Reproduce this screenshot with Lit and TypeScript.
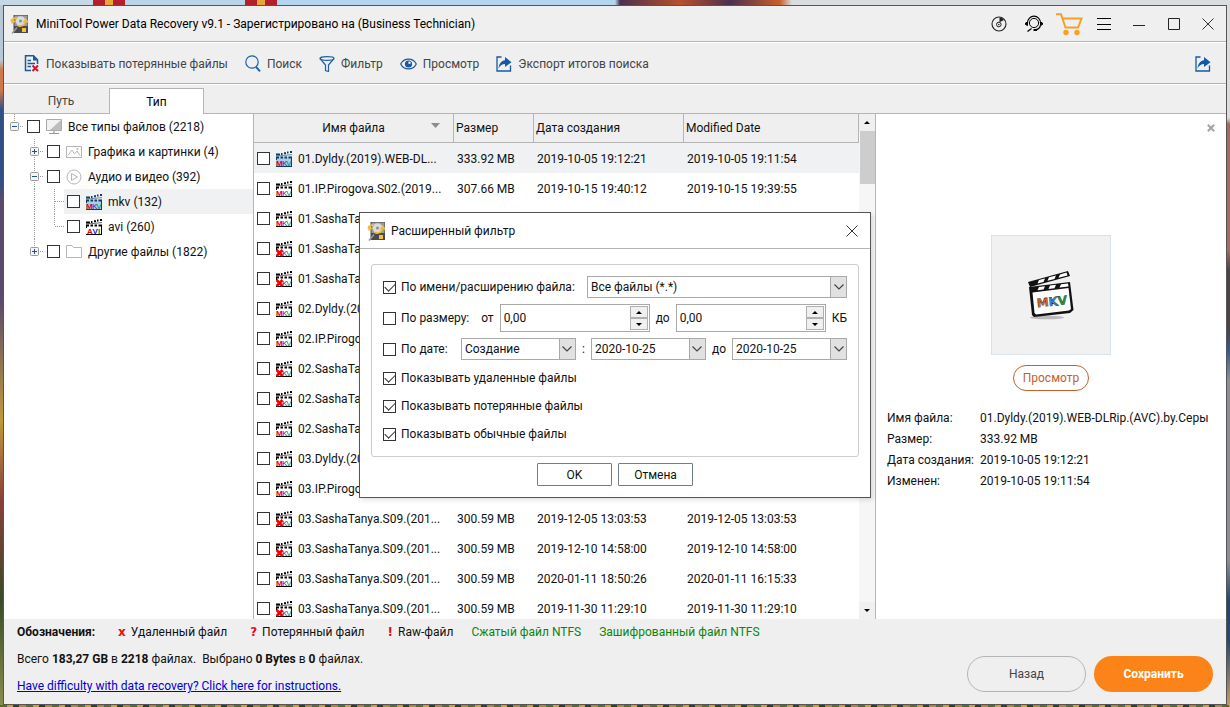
import { LitElement, html, css, svg, nothing } from "lit";
import { customElement, property, state } from "lit/decorators.js";
import { classMap } from "lit/directives/class-map.js";

type FileRow = {
  name: string;
  size: string;
  created: string;
  modified: string;
  deleted?: boolean;
};

const FILES: FileRow[] = [
  { name: "01.Dyldy.(2019).WEB-DL...", size: "333.92 MB", created: "2019-10-05 19:12:21", modified: "2019-10-05 19:11:54" },
  { name: "01.IP.Pirogova.S02.(2019...", size: "307.66 MB", created: "2019-10-15 19:40:12", modified: "2019-10-15 19:39:55" },
  { name: "01.SashaTanya.S09.(201...", size: "300.59 MB", created: "2019-12-02 13:01:20", modified: "2019-12-02 13:01:20" },
  { name: "01.SashaTanya.S09.(201...", size: "300.59 MB", created: "2019-12-02 14:20:41", modified: "2019-12-02 14:20:41", deleted: true },
  { name: "01.SashaTanya.S09.(201...", size: "300.59 MB", created: "2019-12-03 12:11:09", modified: "2019-12-03 12:11:09", deleted: true },
  { name: "02.Dyldy.(2019).WEB-DL...", size: "333.92 MB", created: "2019-10-05 19:22:10", modified: "2019-10-05 19:21:54" },
  { name: "02.IP.Pirogova.S02.(2019...", size: "307.66 MB", created: "2019-10-15 19:50:12", modified: "2019-10-15 19:49:55" },
  { name: "02.SashaTanya.S09.(201...", size: "300.59 MB", created: "2019-12-03 13:03:53", modified: "2019-12-03 13:03:53", deleted: true },
  { name: "02.SashaTanya.S09.(201...", size: "300.59 MB", created: "2019-12-04 13:03:53", modified: "2019-12-04 13:03:53", deleted: true },
  { name: "02.SashaTanya.S09.(201...", size: "300.59 MB", created: "2019-12-04 15:13:53", modified: "2019-12-04 15:13:53" },
  { name: "03.Dyldy.(2019).WEB-DL...", size: "333.92 MB", created: "2019-10-05 19:32:21", modified: "2019-10-05 19:31:54" },
  { name: "03.IP.Pirogova.S02.(2019...", size: "307.66 MB", created: "2019-10-15 20:10:12", modified: "2019-10-15 20:09:55" },
  { name: "03.SashaTanya.S09.(201...", size: "300.59 MB", created: "2019-12-05 13:03:53", modified: "2019-12-05 13:03:53", deleted: true },
  { name: "03.SashaTanya.S09.(201...", size: "300.59 MB", created: "2019-12-10 14:58:00", modified: "2019-12-10 14:58:00", deleted: true },
  { name: "03.SashaTanya.S09.(201...", size: "300.59 MB", created: "2020-01-11 18:50:26", modified: "2020-01-11 16:15:33" },
  { name: "03.SashaTanya.S09.(201...", size: "300.59 MB", created: "2019-11-30 11:29:10", modified: "2019-11-30 11:29:10", deleted: true },
];

type Node = { label: string; icon: string; depth: number; guide: string; box?: "plus" | "minus"; selected?: boolean };

const TREE: Node[] = [
  { label: "Все типы файлов (2218)", icon: "monitor", depth: 0, guide: "M10.5 0V8M16 12.5H20", box: "minus" },
  { label: "Графика и картинки (4)", icon: "picture", depth: 1, guide: "M30.5 0V25M36 12.5H40", box: "plus" },
  { label: "Аудио и видео (392)", icon: "play", depth: 1, guide: "M30.5 0V25M36 12.5H40", box: "minus" },
  { label: "mkv (132)", icon: "mkv-blue", depth: 2, guide: "M30.5 0V25M50.5 0V25M51 12.5H60", selected: true },
  { label: "avi (260)", icon: "avi", depth: 2, guide: "M30.5 0V25M50.5 0V12M51 12.5H60" },
  { label: "Другие файлы (1822)", icon: "folder", depth: 1, guide: "M30.5 0V12M36 12.5H40", box: "plus" },
];

const clapper = (ink: string, paper: string, body: unknown) => svg`
  <path d="M0 3.500H4M5 3H6.500M8 2.200H10M11 1.600H12.500M14 1H16" stroke=${ink} stroke-width="2"/>
  <path d="M0 5.200L16 3.600" stroke=${ink} stroke-width=".600"/>
  <path d="M0 5.500H16V16H0Z" fill=${paper}/>
  <path d="M0 6.500H3M4.500 6.500H7M8.500 6.500H11M12.500 6.500H16" stroke=${ink} stroke-width="2"/>
  <path d="M0 15.500H16M15.500 6V16M.500 6V9" stroke=${ink}/>
  ${body}`;

const letters = (a: string, b: string, c: string) => svg`
  <text y="14.500" font-family="Liberation Sans" font-size="8"><tspan x="0" fill="#e00010" font-weight="700">${a}</tspan><tspan x="6" fill="#1020d0">${b}</tspan><tspan x="10.300" fill="#008a20">${c}</tspan></text>`;

const ICONS: Record<string, { w: number; h: number; art: unknown }> = {
  app: { w: 20, h: 20, art: svg`
    <path d="M3.500 1H18V19H3.500Z" fill="#4a4a4a"/><path d="M4.500 1.500H17.500V12H4.500Z" fill="#989b9f"/>
    <circle cx="10.500" cy="7" r="4.800" fill="#d9dcdf"/><circle cx="10.500" cy="7" r="1.500" fill="#8d8d8d"/>
    <path d="M1 7.500C3 4 5 3.500 7 5M7.500 11.500C12 13 15 11 15.500 7M13.500 8.500L15.700 5.500L18 8.500" fill="none" stroke="#f0bc3c" stroke-width="1.800"/>
    <path d="M1 4.500L1.500 10L6 7.500Z" fill="#f0bc3c"/>
    <path d="M12 14H16V18H12Z" fill="#f3c338"/><path d="M2 19.500L7 13.500" stroke="#999" stroke-width="1.500"/>` },
  lost: { w: 16, h: 17, art: svg`
    <path d="M7 15.500H1.500V.800H9.500L13.500 4.800V9" fill="none" stroke="#1a5a9c" stroke-width="1.500"/>
    <path d="M9 .500V5.500H14L9 .500Z" fill="#1a5a9c"/>
    <path d="M3.500 5.500H7M3.500 8.500H11M3.500 11.500H7" stroke="#1a5a9c" stroke-width="1.400"/>
    <path d="M8.500 10.500L14 16M14 10.500L8.500 16" stroke="#d0142c" stroke-width="2"/>` },
  search: { w: 16, h: 17, art: svg`
    <circle cx="7" cy="7" r="6.200" fill="none" stroke="#1a62ab" stroke-width="1.200"/>
    <path d="M11 11.800L15 16.300" stroke="#1a62ab" stroke-width="2"/>` },
  funnel: { w: 16, h: 16, art: svg`
    <path d="M1 2.500L6.500 9V14.500L9.500 15.500V9L15 2.500" fill="none" stroke="#1a62ab" stroke-width="1.200"/>
    <ellipse cx="8" cy="2.500" rx="7" ry="1.800" fill="none" stroke="#1a62ab" stroke-width="1.200"/>` },
  eye: { w: 17, h: 12, art: svg`
    <path d="M.700 6C4-.500 13-.500 16.300 6C13 12.500 4 12.500 .700 6Z" fill="none" stroke="#1a5a9c" stroke-width="1.200"/>
    <circle cx="8.500" cy="6" r="3.600" fill="#1a5a9c"/><circle cx="9.500" cy="4.800" r="1.200" fill="#efefef"/>` },
  share: { w: 16, h: 16, art: svg`
    <path d="M5.500 1H1V15H14.500V9.500" fill="none" stroke="#1259a8" stroke-width="1.300"/>
    <path d="M2.500 12.500C3 7.500 5.500 4.500 9 4.200V1L15.500 6.200L9 11V8C6 8 4 9.500 2.500 12.500Z" fill="#1259a8"/>` },
  disc: { w: 16, h: 16, art: svg`
    <circle cx="8" cy="8" r="7" fill="none" stroke="#222" stroke-width="1.100"/>
    <circle cx="7.800" cy="8.500" r="2.300" fill="none" stroke="#222"/><circle cx="7.800" cy="8.500" r=".800" fill="#222"/>
    <path d="M8.500 6.200V1.500A7 7 0 0 1 13 4Z" fill="#222"/>` },
  support: { w: 20, h: 18, art: svg`
    <circle cx="10" cy="8" r="4.600" fill="none" stroke="#000"/>
    <path d="M3.500 8A6.500 6.800 0 0 1 16.500 8" fill="none" stroke="#000" stroke-width="1.200"/>
    <path d="M3.500 7V10.500L1.500 9.500V8ZM16.500 7V10.500L18.500 9.500V8Z" fill="#000" stroke="#000"/>
    <path d="M16.500 10.500C15.500 13.500 13.500 14.800 11 14.800M7.500 13.500L3.500 16.500" fill="none" stroke="#000" stroke-width="1.300"/>
    <path d="M9.500 14H13V16H9.500Z" fill="#000"/>` },
  cart: { w: 28, h: 24, art: svg`
    <path d="M1 2.200H6L10.500 15.500H23L26.500 6.500H8" fill="none" stroke="#f5a02a" stroke-width="2"/>
    <circle cx="11" cy="20.500" r="2.700" fill="#f5a02a"/><circle cx="22" cy="20.500" r="2.700" fill="#f5a02a"/>` },
  menu: { w: 14, h: 12, art: svg`<path d="M0 .500H14M0 6.500H14M0 11.500H14" stroke="#000"/>` },
  min: { w: 12, h: 12, art: svg`<path d="M0 7.500H12" stroke="#222"/>` },
  max: { w: 12, h: 12, art: svg`<path d="M.500 .500H11.500V11.500H.500Z" fill="none" stroke="#222"/>` },
  close: { w: 12, h: 12, art: svg`<path d="M.500 .500L11.500 11.500M11.500 .500L.500 11.500" stroke="#333"/>` },
  closeSmall: { w: 8, h: 8, art: svg`<path d="M.800 .800L7.200 7.200M7.200 .800L.800 7.200" stroke="#a3a3a3" stroke-width="2"/>` },
  monitor: { w: 16, h: 16, art: svg`
    <path d="M.500 .500H15.500V11.500H.500Z" fill="#f2f2f2" stroke="#aaa"/><path d="M15 1V11H4Z" fill="#bdbdbd"/>
    <path d="M8 12V14M3 14.500H13" stroke="#999" stroke-width="1.200"/>` },
  picture: { w: 16, h: 16, art: svg`
    <path d="M.500 2.500H15.500V13.500H.500Z" fill="none" stroke="#b5b5b5"/>
    <path d="M2 11.500L6 6L8.500 10L11 7L14 11.500" fill="none" stroke="#b5b5b5"/><circle cx="11.500" cy="5" r="1" fill="#b5b5b5"/>` },
  play: { w: 16, h: 16, art: svg`
    <circle cx="8" cy="8" r="7" fill="none" stroke="#b5b5b5"/><path d="M5.500 4.500L11.500 8L5.500 11.500Z" fill="none" stroke="#b5b5b5"/>` },
  folder: { w: 16, h: 16, art: svg`
    <path d="M.500 13.500V1.500H6L7.500 3.500H15.500V13.500Z" fill="none" stroke="#b5b5b5"/>` },
  mkv: { w: 16, h: 16, art: clapper("#000", "#fff", letters("M", "K", "V")) },
  "mkv-blue": { w: 16, h: 16, art: clapper("#0f3c63", "#a9cdec", letters("M", "K", "V")) },
  "mkv-deleted": { w: 16, h: 16, art: clapper("#000", "#fff", svg`${letters("", "K", "V")}
    <path d="M.500 9L6.500 15M6.500 9L.500 15" stroke="#f00000" stroke-width="2.600"/>`) },
  avi: { w: 16, h: 16, art: clapper("#000", "#fff", svg`<text y="14.500" font-family="Liberation Sans" font-size="8" font-weight="700"><tspan x="1" fill="#e00010">A</tspan><tspan x="6.500" fill="#1020d0">V</tspan><tspan x="12" fill="#008a20">I</tspan></text>`) },
  chevron: { w: 10, h: 6, art: svg`<path d="M.500 .500L5 5L9.500 .500" fill="none" stroke="#444" stroke-width="1.200"/>` },
  up: { w: 6, h: 3, art: svg`<path d="M0 3L3 0L6 3Z" fill="#000"/>` },
  down: { w: 6, h: 3, art: svg`<path d="M0 0L3 3L6 0Z" fill="#000"/>` },
  sort: { w: 9, h: 5, art: svg`<path d="M0 0H9L4.500 5Z" fill="#8c8c8c"/>` },
  poster: { w: 48, h: 50, art: svg`
    <ellipse cx="20" cy="47.500" rx="17" ry="1.800" fill="#bbb"/>
    <path d="M1 12L41 1L43 6L3 17Z" fill="#111"/>
    <path d="M12 10L18 8.400L16.500 12L10.500 13.600ZM22 7.200L29 5.400L27.500 9L20.500 10.800ZM33 4.400L39.500 2.600L40.500 5.500L31.500 7.800Z" fill="#fff"/>
    <path d="M2 17L43 12L46.500 40L43 43L7 47L5 45Z" fill="#111"/>
    <path d="M12 17L18 16.200L16.500 19.500L10.500 20.200ZM23 15.500L29 14.800L27.500 18.200L21.500 19ZM34 14.200L41 13.400L41.500 16.500L32.500 17.500Z" fill="#fff"/>
    <path d="M5.500 22.500L41.500 18L44 39L42 40.500L9 44.500L7.500 43Z" fill="#fff"/>
    <text x="25" y="36" text-anchor="middle" transform="rotate(-6 25 32)" font-family="DejaVu Sans" font-size="12" font-weight="700" stroke="#222" stroke-width=".400"><tspan fill="#e0622a">M</tspan><tspan fill="#3b86cc">K</tspan><tspan fill="#239a3c">V</tspan></text>` },
};

const icon = (name: string) => {
  const i = ICONS[name];
  return html`<svg class="icon" width=${i.w} height=${i.h} viewBox="0 0 ${i.w} ${i.h}" aria-hidden="true">${i.art}</svg>`;
};

const shared = css`
  * { box-sizing: border-box; }
  :host { box-sizing: border-box; }
  button, input, select { font: inherit; color: inherit; margin: 0; padding: 0; }
  button { background: none; border: 0; display: inline-flex; align-items: center; justify-content: center; }
  .icon { display: block; flex: none; }
  input[type="checkbox"] {
    appearance: none;
    flex: none;
    display: grid;
    place-items: center;
    width: 13px;
    height: 13px;
    border: 1px solid #333;
    background: #fff;
  }
  input[type="checkbox"]:checked::after {
    content: "";
    width: 9px;
    height: 5px;
    border: solid #333;
    border-width: 0 0 1px 1px;
    transform: translateY(-1px) rotate(-45deg);
  }
`;

@customElement("filter-dialog")
class FilterDialog extends LitElement {
  static styles = [
    shared,
    css`
      :host { display: block; width: 512px; background: #fff; border: 1px solid #555; box-shadow: 2px 2px 5px rgba(0, 0, 0, 0.12); }
      .head { display: flex; align-items: center; gap: 4px; height: 36px; padding: 0 12px 0 7px; border-bottom: 1px solid #b5b5b5; }
      .head h2 { flex: 1; margin: 0; font-size: 12px; font-weight: 400; }
      .group { display: flex; flex-direction: column; margin: 15px 11px 6px; padding: 11px 11px 8px; border: 1px solid #ccc; border-radius: 3px; }
      .line { display: flex; align-items: center; margin-bottom: 6px; }
      .line.last { margin-bottom: 4px; }
      .check { display: flex; align-items: center; gap: 5px; white-space: nowrap; }
      .tick { height: 28px; }
      .combo { display: grid; height: 22px; border: 1px solid #a9a9a9; }
      .combo > * { grid-area: 1 / 1; }
      .combo select { appearance: none; width: 100%; min-width: 0; border: 0; padding: 0 18px 0 3px; background: none; }
      .arrow { justify-self: end; display: grid; place-items: center; width: 16px; background: #e1e1e1; border-left: 1px solid #a9a9a9; pointer-events: none; }
      .wide { width: 260px; margin-left: auto; }
      .spin { display: flex; width: 150px; height: 28px; padding: 1px; border: 1px solid #a9a9a9; }
      .spin input { flex: 1; min-width: 0; border: 0; padding: 0 2px; background: none; }
      .steps { display: flex; flex-direction: column; width: 18px; }
      .steps button { flex: 1; border: 1px solid #b0b0b0; background: #f0f0f0; }
      .from { margin: 0 6px 0 auto; }
      .to { margin: 0 6px; }
      .unit { margin-left: 6px; }
      .kind { width: 115px; margin-left: auto; }
      .colon { width: 15px; text-align: center; }
      .date { width: 115px; }
      .actions { display: flex; justify-content: center; gap: 6px; padding-bottom: 11px; }
      .actions button { width: 75px; height: 23px; border: 1px solid #6f7f8a; border-radius: 1px; background: #fff; }
    `,
  ];

  private check(label: string, on: boolean) {
    return html`<label class="check"><input type="checkbox" .checked=${on} />${label}</label>`;
  }

  private combo(label: string, value: string, cls: string) {
    return html`<span class="combo ${cls}">
      <span class="arrow">${icon("chevron")}</span>
      <select aria-label=${label}><option>${value}</option></select>
    </span>`;
  }

  private spin(label: string) {
    return html`<span class="spin">
      <input type="text" aria-label=${label} .value=${"0,00"} />
      <span class="steps">
        <button aria-label="Больше">${icon("up")}</button>
        <button aria-label="Меньше">${icon("down")}</button>
      </span>
    </span>`;
  }

  private dismiss() {
    this.dispatchEvent(new CustomEvent("dismiss"));
  }

  render() {
    return html`
      <div class="head">
        ${icon("app")}
        <h2>Расширенный фильтр</h2>
        <button aria-label="Закрыть" @click=${this.dismiss}>${icon("close")}</button>
      </div>
      <div class="group">
        <div class="line">
          ${this.check("По имени/расширению файла:", true)}
          ${this.combo("Расширение файла", "Все файлы (*.*)", "wide")}
        </div>
        <div class="line">
          ${this.check("По размеру:", false)}
          <span class="from">от</span>${this.spin("Размер от")}
          <span class="to">до</span>${this.spin("Размер до")}
          <span class="unit">КБ</span>
        </div>
        <div class="line last">
          ${this.check("По дате:", false)}
          ${this.combo("Вид даты", "Создание", "kind")}
          <span class="colon">:</span>${this.combo("Дата от", "2020-10-25", "date")}
          <span class="to">до</span>${this.combo("Дата до", "2020-10-25", "date")}
        </div>
        <div class="tick check">${this.check("Показывать удаленные файлы", true)}</div>
        <div class="tick check">${this.check("Показывать потерянные файлы", true)}</div>
        <div class="tick check">${this.check("Показывать обычные файлы", true)}</div>
      </div>
      <div class="actions">
        <button @click=${this.dismiss}>OK</button>
        <button @click=${this.dismiss}>Отмена</button>
      </div>
    `;
  }
}

@customElement("type-tree")
class TypeTree extends LitElement {
  static styles = [
    shared,
    css`
      :host { display: block; background: #fff; }
      ul { margin: 0; padding: 0; list-style: none; }
      li { display: flex; height: 25px; }
      label { flex: 1; display: flex; align-items: center; gap: 6px; padding-left: 3px; white-space: nowrap; }
      .selected { background: #eff1f3; }
    `,
  ];

  render() {
    return html`<ul>
      ${TREE.map((n) => {
        const width = 20 + n.depth * 20;
        const x = width - 14;
        return html`<li>
          <svg class="icon" width=${width} height="25" viewBox="0 0 ${width} 25" aria-hidden="true">
            <path d=${n.guide} fill="none" stroke="#999" stroke-dasharray="1 1" />
            ${n.box
              ? svg`<rect x=${x + 0.5} y="8.5" width="8" height="8" rx="1" fill="#f4f4f4" stroke="#999"/>
                  <path d=${`M${x + 2} 12.5H${x + 7}` + (n.box === "plus" ? `M${x + 4.5} 10V15` : "")} stroke="#1e4f9c"/>`
              : nothing}
          </svg>
          <label class=${classMap({ selected: !!n.selected })}>
            <input type="checkbox" />${icon(n.icon)}<span>${n.label}</span>
          </label>
        </li>`;
      })}
    </ul>`;
  }
}

@customElement("file-table")
class FileTable extends LitElement {
  @property({ attribute: false }) files: FileRow[] = [];

  static styles = [
    shared,
    css`
      :host { display: flex; min-width: 0; background: #fff; overflow: hidden; border: solid #b5b5b5; border-width: 0 1px; }
      .view { flex: 1; min-width: 0; overflow: hidden; }
      table { width: 100%; table-layout: fixed; border-collapse: separate; border-spacing: 0; }
      th, td { padding: 0 3px; text-align: left; font-weight: 400; white-space: nowrap; overflow: hidden; }
      th { height: 29px; padding: 0 2px; background: #efefef; border: solid #b5b5b5; border-width: 0 1px 1px 0; }
      td { height: 30px; padding-top: 1px; }
      .c-name { width: 200px; }
      .c-size { width: 80px; }
      .c-date { width: 150px; }
      .title { display: grid; grid-template-columns: 1fr auto 1fr; align-items: center; }
      .title span { grid-column: 2; }
      .title svg { justify-self: end; margin: 0 11px 6px 0; }
      .name { display: flex; align-items: center; gap: 6px; }
      .current td { background: #eff1f3; }
      .scroll { display: flex; flex-direction: column; align-items: center; width: 16px; background: #f6f6f6; }
      .scroll button { width: 16px; height: 17px; background: #f0f0f0; }
      .thumb { width: 15px; height: 53px; background: #cdcdcd; margin-bottom: auto; }
    `,
  ];

  render() {
    return html`
      <div class="view">
        <table>
          <thead>
            <tr>
              <th class="c-name"><div class="title"><span>Имя файла</span>${icon("sort")}</div></th>
              <th class="c-size">Размер</th>
              <th class="c-date">Дата создания</th>
              <th>Modified Date</th>
            </tr>
          </thead>
          <tbody>
            ${this.files.map(
              (f, i) => html`<tr class=${classMap({ current: i === 0 })}>
                <td>
                  <label class="name">
                    <input type="checkbox" />${icon(i === 0 ? "mkv-blue" : f.deleted ? "mkv-deleted" : "mkv")}<span>${f.name}</span>
                  </label>
                </td>
                <td>${f.size}</td>
                <td>${f.created}</td>
                <td>${f.modified}</td>
              </tr>`
            )}
          </tbody>
        </table>
      </div>
      <div class="scroll">
        <button aria-label="Вверх">${icon("up")}</button>
        <div class="thumb"></div>
        <button aria-label="Вниз">${icon("down")}</button>
      </div>
    `;
  }
}

@customElement("app-root")
class AppRoot extends LitElement {
  @state() private filterOpen = true;

  static styles = [
    shared,
    css`
      :host {
        position: relative;
        display: flex;
        height: 100vh;
        padding: 5px 3px 2px;
        overflow: hidden;
        font: 12px/16px Roboto, "Liberation Sans", sans-serif;
        color: #111;
        background:
          linear-gradient(90deg, #c4d8e6 0 93px, #b3202c 93px 105px, #e9a53a 105px 113px, #b3202c 113px 125px, #b9d3e8 125px 245px, #b3202c 245px 257px, #e9a53a 257px 265px, #b3202c 265px 277px, #b4d5ee 277px 615px, #4a3050 620px, #b8502c 680px, #4a3050 730px, #c8602c 780px, #d9dde2 792px) top / 100% 5px no-repeat,
          repeating-linear-gradient(90deg, #5f6b25 0 7px, #c9a339 7px 13px, #33421c 13px 19px, #a98a3a 19px 26px) bottom / 100% 2px no-repeat,
          linear-gradient(180deg, #b9c8d6 0 60px, #d0784c 70px 90px, #2f4f86 110px 180px, #5a4a6c 200px 300px, #c09a3a 420px, #8a3f3a 500px, #3a4a2a 600px, #8a8f4a) left / 3px 100% no-repeat,
          linear-gradient(180deg, #dcdcdc 0 118px, #a86a60 124px 250px, #4a4448 270px 330px, #2d5a94 350px, #8d8f92 380px 560px, #1f4a74 600px 640px, #d09a60) right / 3px 100% no-repeat;
      }
      .window { flex: 1; min-width: 0; display: flex; flex-direction: column; border: 1px solid #555; background: #efefef; }
      .titlebar { display: flex; align-items: center; height: 36px; padding: 0 12px 0 6px; border-bottom: 1px solid #b5b5b5; }
      .titlebar h1 { flex: 1; margin: 0 0 0 6px; font-size: 12px; font-weight: 400; color: #000; }
      .titlebar nav { display: flex; }
      .titlebar nav button { width: 35px; height: 30px; }
      .titlebar nav button:last-child { justify-content: flex-end; width: 23px; }
      .toolbar { display: flex; align-items: center; gap: 17px; height: 42px; padding: 1px 15px 0 20px; border-top: 1px solid #fff; border-bottom: 1px solid #b5b5b5; color: #444; }
      .toolbar button { gap: 6px; }
      .toolbar button:last-child { margin-left: auto; }
      .tabs { display: flex; align-items: flex-end; height: 30px; padding-left: 9px; border-top: 1px solid #fff; border-bottom: 1px solid #b5b5b5; color: #444; }
      .tabs button { width: 96px; height: 25px; }
      .tabs .on { width: 95px; height: 26px; margin-bottom: -1px; border: 1px solid #b5b5b5; border-bottom: 0; background: #fff; color: #000; }
      .main { flex: 1; min-height: 0; display: grid; grid-template: minmax(0, 1fr) / 249px minmax(0, 1fr) 350px; }
      .details { display: flex; flex-direction: column; align-items: center; min-width: 0; padding: 10px 11px 0; background: #fff; overflow: hidden; }
      .details .x { align-self: flex-end; }
      .thumb { display: grid; place-items: center; width: 120px; height: 120px; margin: 103px 0 10px; border: 1px solid #d8e2e9; background: #f1f1f1; flex: none; }
      .details .preview { width: 76px; height: 26px; border: 1px solid #c2622a; border-radius: 13px; color: #c2622a; flex: none; }
      dl { align-self: stretch; display: grid; grid-template-columns: 93px minmax(0, 1fr); margin: 17px 0 0; line-height: 21px; white-space: nowrap; }
      dd { margin: 0; overflow: hidden; }
      .footer { display: flex; align-items: flex-end; justify-content: space-between; height: 85px; padding: 0 13px; }
      .info { align-self: flex-start; padding-top: 5px; }
      .info p { margin: 0 0 11px; white-space: nowrap; }
      .legend { display: flex; gap: 18px; }
      .legend .flag { margin-left: 5px; }
      .mark { margin-right: 5px; font-family: "DejaVu Sans", sans-serif; font-weight: 700; color: #e80c0c; }
      .legend .ntfs { color: #0a860a; }
      a { color: #0000d8; }
      .buttons { display: flex; gap: 8px; padding-bottom: 12px; }
      .buttons button { width: 119px; height: 36px; border: 1px solid #b5b5b5; border-radius: 18px; color: #444; }
      .buttons .save { border: 0; background: #fb8318; color: #fff; font-weight: 700; }
      .overlay { position: absolute; inset: 0; display: grid; place-items: center; padding-top: 3px; pointer-events: none; }
      .overlay filter-dialog { pointer-events: auto; }
    `,
  ];

  render() {
    return html`
      <div class="window">
        <header class="titlebar">
          ${icon("app")}
          <h1>MiniTool Power Data Recovery v9.1 - Зарегистрировано на (Business Technician)</h1>
          <nav>
            <button aria-label="Диск">${icon("disc")}</button>
            <button aria-label="Поддержка">${icon("support")}</button>
            <button aria-label="Купить">${icon("cart")}</button>
            <button aria-label="Меню">${icon("menu")}</button>
            <button aria-label="Свернуть">${icon("min")}</button>
            <button aria-label="Развернуть">${icon("max")}</button>
            <button aria-label="Закрыть">${icon("close")}</button>
          </nav>
        </header>
        <div class="toolbar">
          <button>${icon("lost")}Показывать потерянные файлы</button>
          <button>${icon("search")}Поиск</button>
          <button @click=${() => (this.filterOpen = true)}>${icon("funnel")}Фильтр</button>
          <button>${icon("eye")}Просмотр</button>
          <button>${icon("share")}Экспорт итогов поиска</button>
          <button aria-label="Поделиться">${icon("share")}</button>
        </div>
        <div class="tabs">
          <button>Путь</button>
          <button class="on">Тип</button>
        </div>
        <main class="main">
          <type-tree></type-tree>
          <file-table .files=${FILES}></file-table>
          <section class="details">
            <button class="x" aria-label="Закрыть">${icon("closeSmall")}</button>
            <div class="thumb">${icon("poster")}</div>
            <button class="preview">Просмотр</button>
            <dl>
              <dt>Имя файла:</dt><dd>01.Dyldy.(2019).WEB-DLRip.(AVC).by.Серы</dd>
              <dt>Размер:</dt><dd>333.92 MB</dd>
              <dt>Дата создания:</dt><dd>2019-10-05 19:12:21</dd>
              <dt>Изменен:</dt><dd>2019-10-05 19:11:54</dd>
            </dl>
          </section>
        </main>
        <footer class="footer">
          <div class="info">
            <p class="legend">
              <b>Обозначения:</b>
              <span class="flag"><span class="mark">x</span>Удаленный файл</span>
              <span class="flag"><span class="mark">?</span>Потерянный файл</span>
              <span class="flag"><span class="mark">!</span>Raw-файл</span>
              <span class="ntfs">Сжатый файл NTFS</span>
              <span class="ntfs">Зашифрованный файл NTFS</span>
            </p>
            <p>Всего <b>183,27 GB</b> в <b>2218</b> файлах.&nbsp; Выбрано <b>0 Bytes</b> в <b>0</b> файлах.</p>
            <p><a href="#help">Have difficulty with data recovery? Click here for instructions.</a></p>
          </div>
          <div class="buttons">
            <button>Назад</button>
            <button class="save">Сохранить</button>
          </div>
        </footer>
      </div>
      ${this.filterOpen
        ? html`<div class="overlay"><filter-dialog @dismiss=${() => (this.filterOpen = false)}></filter-dialog></div>`
        : nothing}
    `;
  }
}
